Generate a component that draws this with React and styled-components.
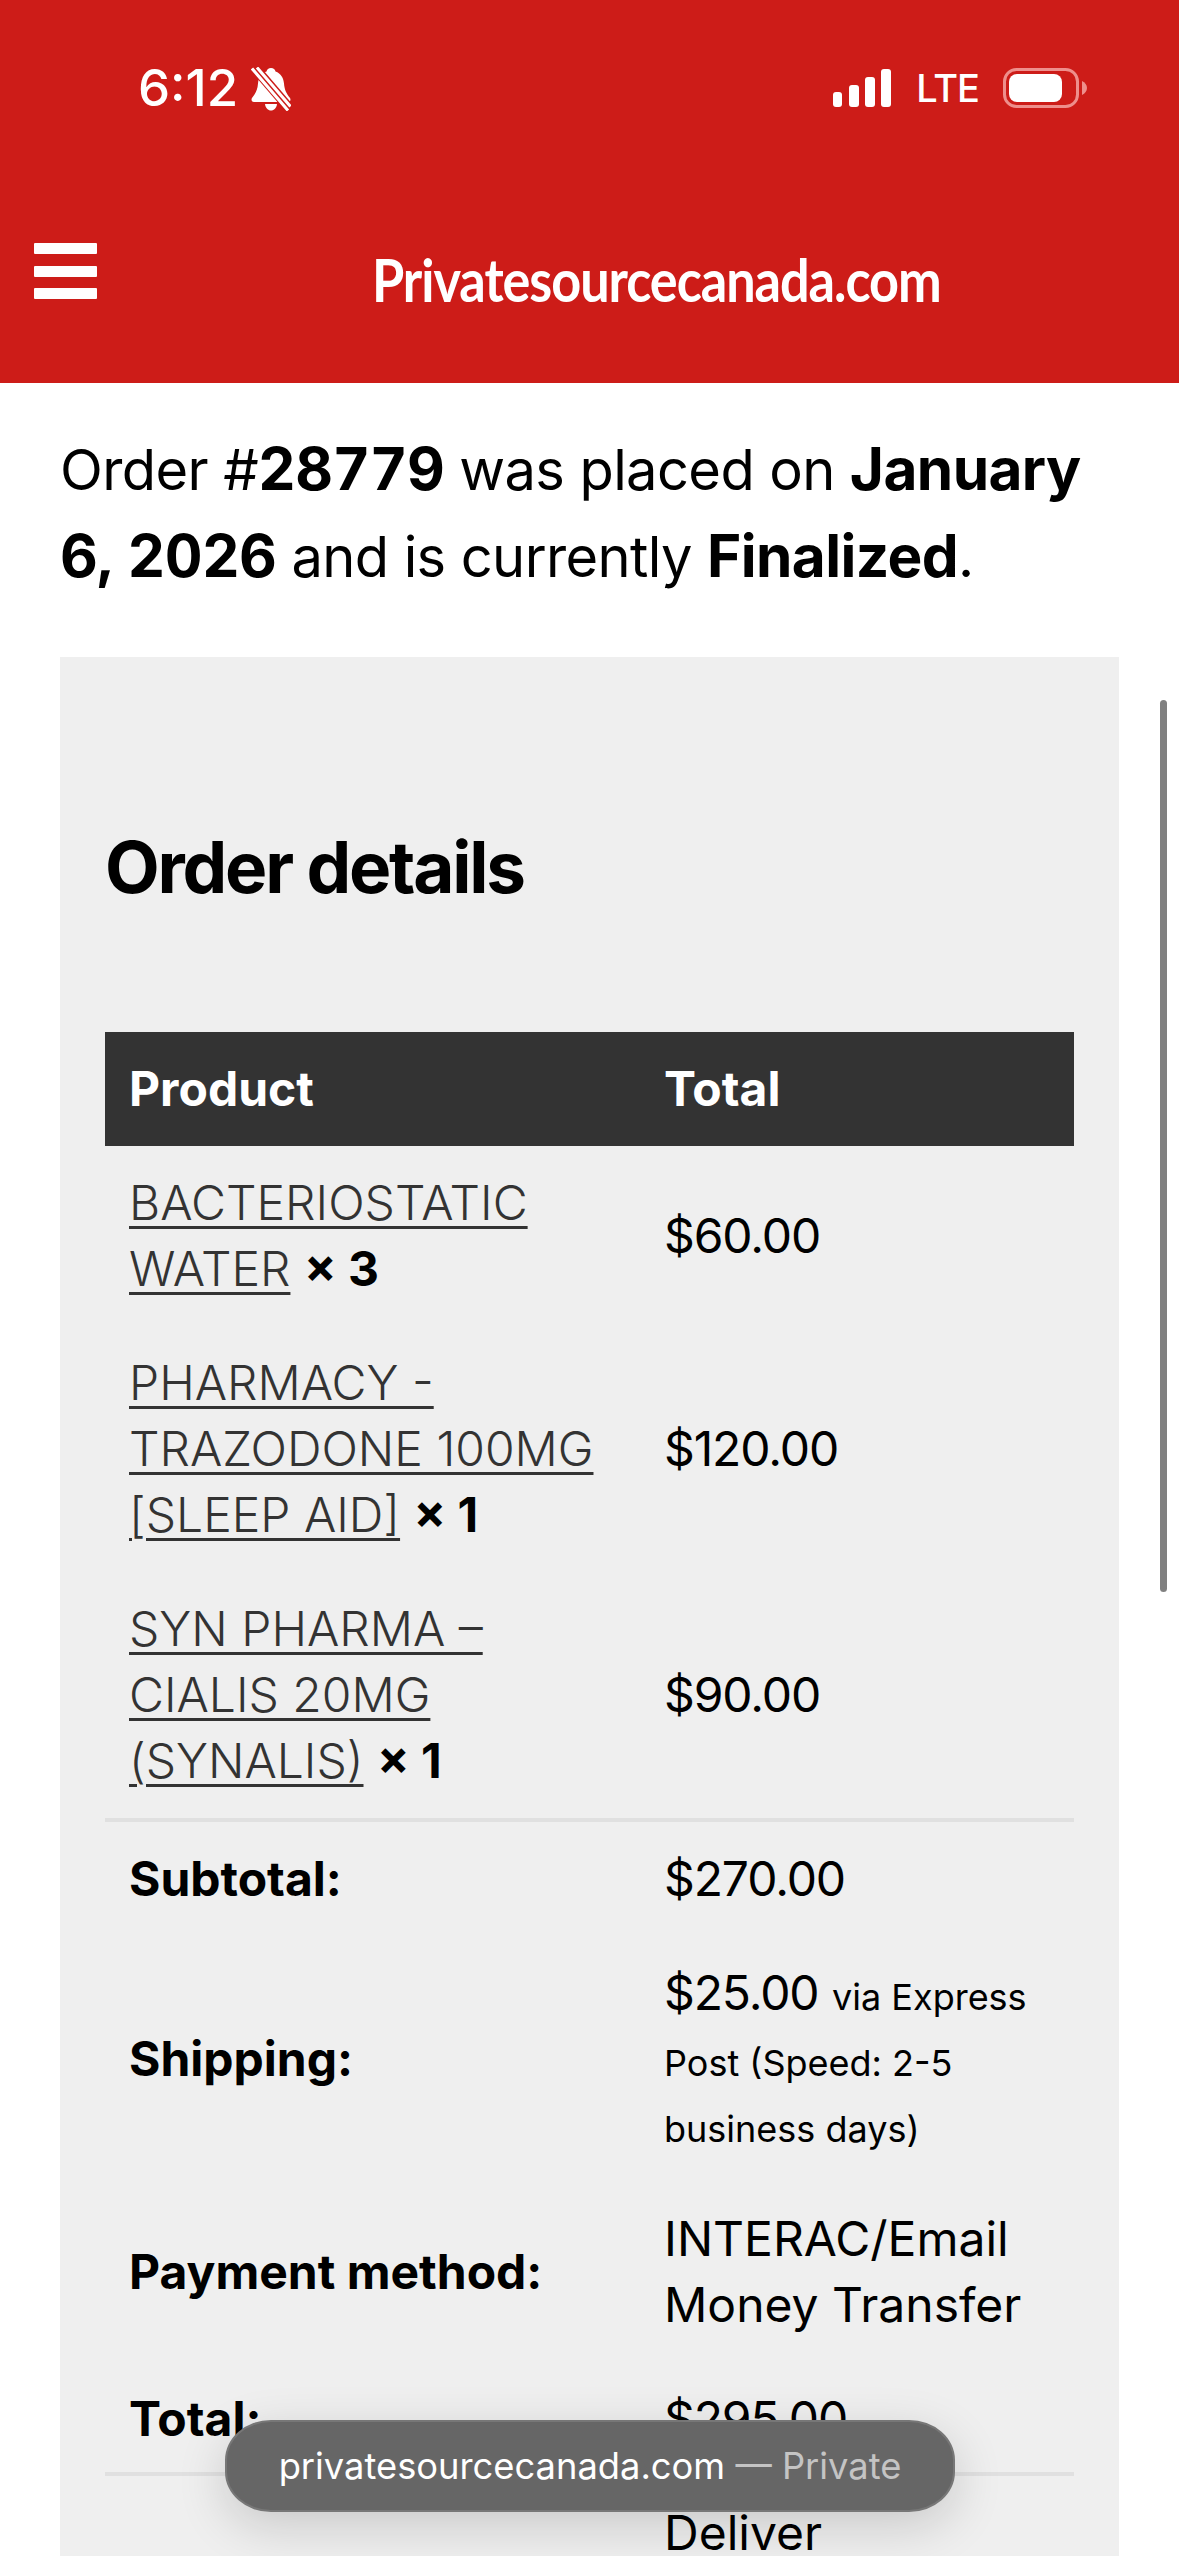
import React from "react";
import styled, { createGlobalStyle } from "styled-components";

const GlobalStyle = createGlobalStyle`
  html, body { margin: 0; padding: 0; background: #fff; }
  * { box-sizing: border-box; }
  body { font-family: Inter, "Liberation Sans", sans-serif; color: #000; }
`;

const Screen = styled.div`
  position: relative;
  width: 1179px;
  height: 2556px;
  overflow: hidden;
  background: #fff;
`;

const Header = styled.header`
  height: 383px;
  background: #cd1c18;
  color: #fff;
  display: flex;
  flex-direction: column;
`;

const StatusBar = styled.div`
  height: 243px;
  padding: 62px 92px 0 138px;
  display: flex;
  align-items: flex-start;
`;

const Time = styled.span`
  font-size: 51px;
  font-weight: 500;
  line-height: 52px;
  width: 113px;
`;

const BellIcon = styled.svg`
  margin-top: 5px;
`;

const StatusRight = styled.div`
  margin-left: auto;
  display: flex;
  align-items: center;
  height: 46px;
  margin-top: 3px;
`;

const Lte = styled.span`
  font-size: 38px;
  font-weight: 500;
  line-height: 46px;
  margin: 0 24px 0 25px;
  letter-spacing: -1px;
`;

const NavRow = styled.div`
  display: flex;
  padding-left: 34px;
`;

const Burger = styled.div`
  width: 63px;
  display: flex;
  flex-direction: column;
  gap: 11.5px;
`;

const BurgerBar = styled.span`
  display: block;
  height: 11px;
  background: #fff;
  border-radius: 1px;
`;

const SiteTitle = styled.div`
  margin: 2px 0 0 275px;
  font-family: Lato, sans-serif;
  font-size: 59px;
  font-weight: 700;
  line-height: 70px;
  letter-spacing: -1.2px;
  white-space: nowrap;
  transform: scaleX(0.885);
  transform-origin: left center;
`;

const Content = styled.main`
  padding: 43px 60px 0;
`;

const Intro = styled.p`
  margin: 0 0 57px;
  font-size: 56px;
  line-height: 85px;
  letter-spacing: -0.6px;
  strong {
    font-size: 58.5px;
    font-weight: 700;
    font-variant-numeric: tabular-nums;
  }
`;

const Card = styled.section`
  background: #efefef;
  padding: 165px 45px 0;
`;

const Heading = styled.h2`
  margin: 0 0 120px;
  font-size: 71px;
  font-weight: 700;
  line-height: 90px;
  letter-spacing: -2.2px;
`;

const Table = styled.table`
  width: 969px;
  border-collapse: collapse;
  table-layout: fixed;
  font-size: 48px;
  line-height: 66px;
`;

const HeadCell = styled.th`
  background: #333;
  color: #fff;
  height: 114px;
  padding: 0 24px;
  text-align: left;
  font-weight: 700;
  font-size: 48px;
`;

const Cell = styled.td`
  padding: ${(p) => (p.$flush ? "24px 24px 20px" : "24px")};
  vertical-align: ${(p) => (p.$top ? "top" : "middle")};
  font-weight: ${(p) => (p.$label ? 700 : 400)};
`;

const Row = styled.tr`
  border-bottom: ${(p) => (p.$line ? "4px solid #e0e0e0" : "none")};
`;

const ProductLink = styled.a`
  color: #333;
  text-decoration: underline;
  text-decoration-thickness: 3px;
  text-underline-offset: 6px;
  font-weight: 300;
`;

const Price = styled.span`
  letter-spacing: -1.1px;
`;

const Small = styled.small`
  font-size: 36px;
  line-height: 50px;
`;

const ScrollThumb = styled.div`
  position: absolute;
  left: 1160px;
  top: 700px;
  width: 7px;
  height: 892px;
  border-radius: 4px;
  background: #808080;
`;

const AddressPill = styled.div`
  position: absolute;
  left: 225px;
  top: 2420px;
  width: 730px;
  height: 92px;
  border-radius: 46px / 40px;
  background: #666;
  border: 2px solid #777;
  box-shadow: 0 14px 50px rgba(0, 0, 0, 0.16);
  color: #fff;
  font-size: 36.3px;
  display: flex;
  align-items: center;
  justify-content: center;
  white-space: nowrap;
`;

const Muted = styled.span`
  color: #c4c4c4;
`;

const BellOff = () => (
  <BellIcon width="40" height="44" viewBox="0 0 40 44">
    <path d="M20 1c2.500 0 4 1.500 4.500 3.500 5.500 2 8 6.500 8.500 12 .5 6 2 9.500 6 14.500 1 1.500.5 4-2 4H3c-2.500 0-3-2.500-2-4 4-5 5.500-8.500 6-14.500.5-5.500 3-10 8.500-12C16 2.500 17.500 1 20 1z" fill="#fff" />
    <path d="M14 37h12c-.5 4-3 6.500-6 6.500S14.500 41 14 37z" fill="#fff" />
    <path d="M3 0l36 42" stroke="#cd1c18" strokeWidth="10" />
    <path d="M1 1.500l36 42M6 .5l33.500 39" stroke="#fff" strokeWidth="3" />
  </BellIcon>
);

const SignalBars = () => (
  <svg width="58" height="38" viewBox="0 0 58 38" fill="#fff">
    <rect x="0" y="23" width="9" height="15" rx="3" />
    <rect x="16" y="16" width="10" height="22" rx="3" />
    <rect x="32" y="8" width="10" height="30" rx="3" />
    <rect x="48" y="0" width="10" height="38" rx="3" />
  </svg>
);

const Battery = () => (
  <svg width="84" height="40" viewBox="0 0 84 40">
    <rect x="1.500" y="1.500" width="73" height="37" rx="12" fill="none" stroke="#ee8f8c" strokeWidth="3" />
    <rect x="6" y="6" width="53" height="28" rx="8" fill="#fff" />
    <path d="M79 13c3 1.500 5 4 5 7s-2 5.500-5 7z" fill="#ee8f8c" />
  </svg>
);

const products = [
  { name: "BACTERIOSTATIC WATER", qty: 3, total: "$60.00" },
  { name: "PHARMACY - TRAZODONE 100MG [SLEEP AID]", qty: 1, total: "$120.00" },
  { name: "SYN PHARMA – CIALIS 20MG (SYNALIS)", qty: 1, total: "$90.00" },
];

export default function App() {
  return (
    <Screen>
      <GlobalStyle />
      <Header>
        <StatusBar>
          <Time>6:12</Time>
          <BellOff />
          <StatusRight>
            <SignalBars />
            <Lte>LTE</Lte>
            <Battery />
          </StatusRight>
        </StatusBar>
        <NavRow>
          <Burger>
            <BurgerBar />
            <BurgerBar />
            <BurgerBar />
          </Burger>
          <SiteTitle>Privatesourcecanada.com</SiteTitle>
        </NavRow>
      </Header>
      <Content>
        <Intro>
          Order #<strong>28779</strong> was placed on <strong>January 6, 2026</strong> and is currently <strong>Finalized</strong>.
        </Intro>
        <Card>
          <Heading>Order details</Heading>
          <Table>
            <colgroup>
              <col style={{ width: 535 }} />
              <col />
            </colgroup>
            <thead>
              <tr>
                <HeadCell>Product</HeadCell>
                <HeadCell>Total</HeadCell>
              </tr>
            </thead>
            <tbody>
              {products.map((p, i) => (
                <Row key={p.name} $line={i === products.length - 1}>
                  <Cell>
                    <ProductLink href="#">{p.name}</ProductLink> <strong>× {p.qty}</strong>
                  </Cell>
                  <Cell><Price>{p.total}</Price></Cell>
                </Row>
              ))}
              <tr>
                <Cell $label>Subtotal:</Cell>
                <Cell><Price>$270.00</Price></Cell>
              </tr>
              <tr>
                <Cell $label>Shipping:</Cell>
                <Cell>
                  <Price>$25.00</Price> <Small>via Express Post (Speed: 2-5 business days)</Small>
                </Cell>
              </tr>
              <tr>
                <Cell $label>Payment method:</Cell>
                <Cell>INTERAC/Email Money Transfer</Cell>
              </tr>
              <Row $line>
                <Cell $label $flush>Total:</Cell>
                <Cell $flush><Price>$295.00</Price></Cell>
              </Row>
              <tr>
                <Cell />
                <Cell $top>Deliver</Cell>
              </tr>
            </tbody>
          </Table>
        </Card>
      </Content>
      <ScrollThumb />
      <AddressPill>
        privatesourcecanada.com&nbsp;<Muted>— Private</Muted>
      </AddressPill>
    </Screen>
  );
}
